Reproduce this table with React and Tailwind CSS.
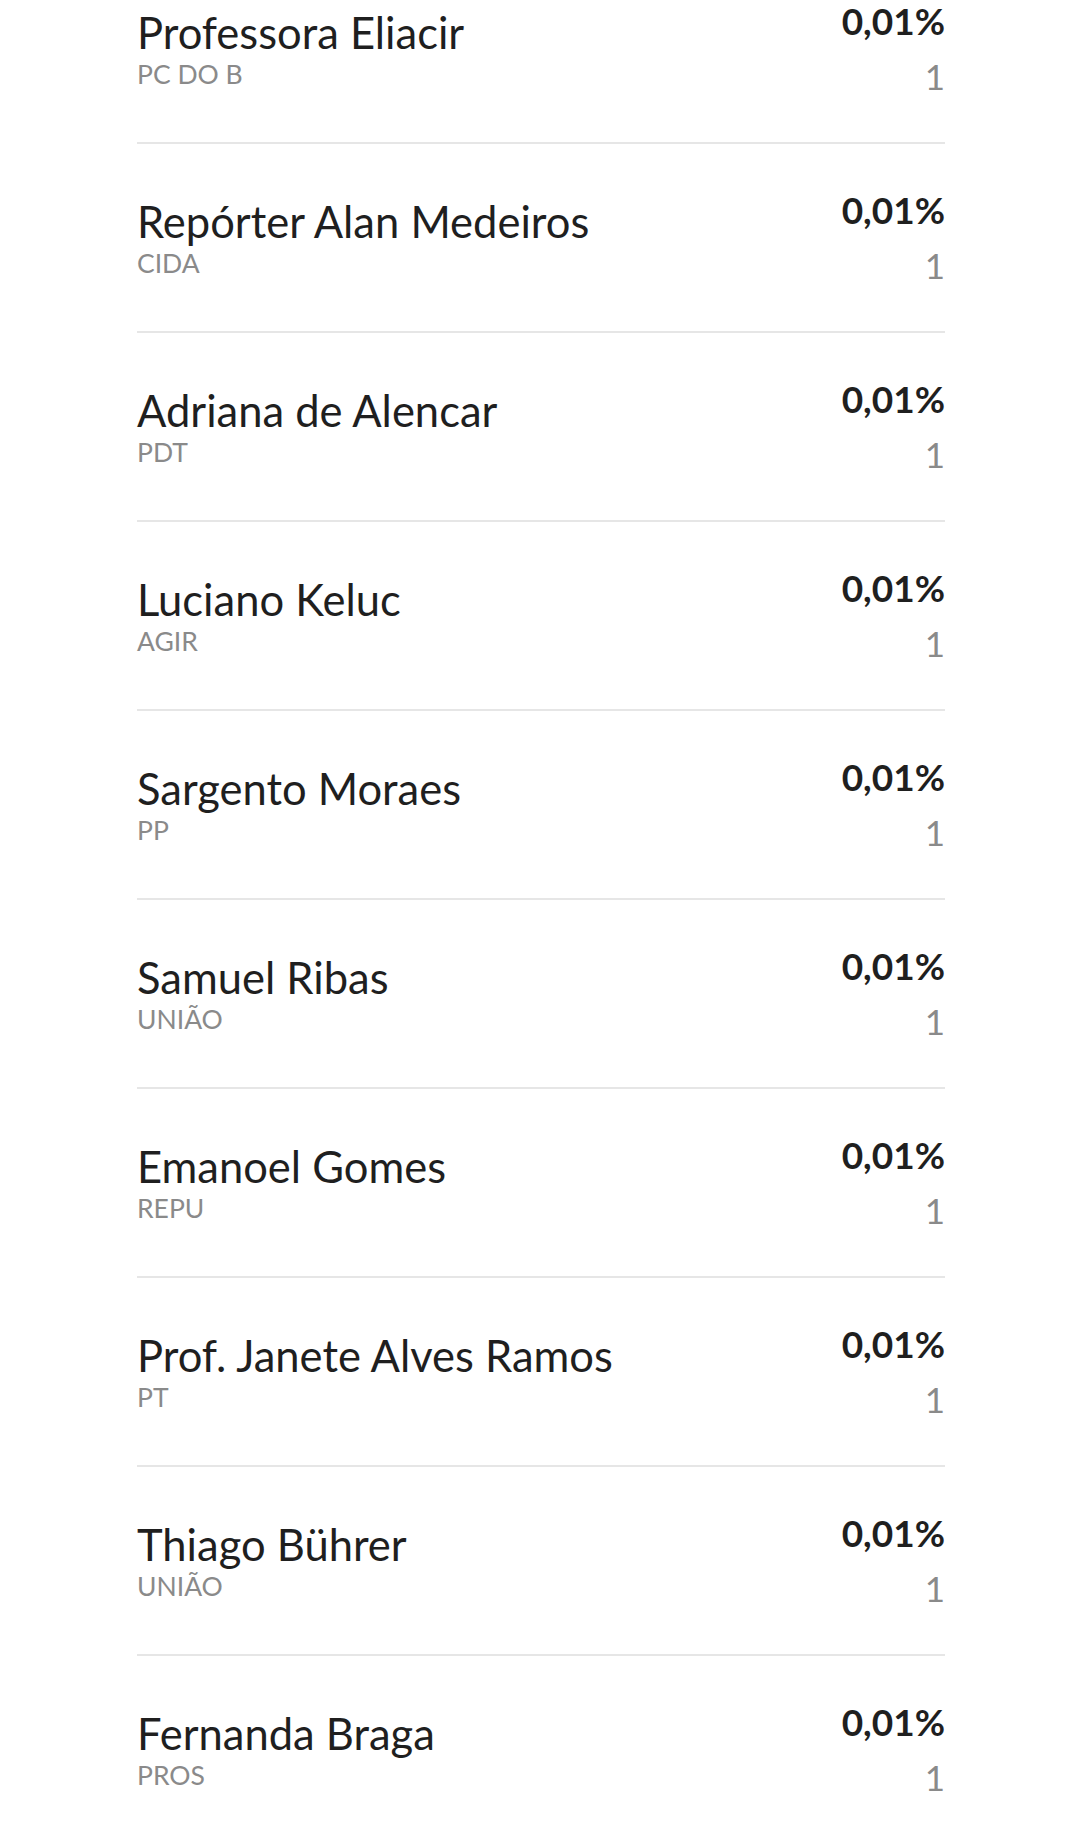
import React from 'react';

const candidates = [
  { name: 'Professora Eliacir', party: 'PC DO B' },
  { name: 'Repórter Alan Medeiros', party: 'CIDA' },
  { name: 'Adriana de Alencar', party: 'PDT' },
  { name: 'Luciano Keluc', party: 'AGIR' },
  { name: 'Sargento Moraes', party: 'PP' },
  { name: 'Samuel Ribas', party: 'UNIÃO' },
  { name: 'Emanoel Gomes', party: 'REPU' },
  { name: 'Prof. Janete Alves Ramos', party: 'PT' },
  { name: 'Thiago Bührer', party: 'UNIÃO' },
  { name: 'Fernanda Braga', party: 'PROS' },
];

const CandidateRow = ({ name, party, percent, votes }) => (
  <li className="flex h-[189px] items-start justify-between border-b-2 border-[#e6e6e6] pt-[47px]">
    <div className="pt-[9px]">
      <p className="text-[43.5px] leading-none text-[#1f1f1f]">{name}</p>
      <p className="mt-[6.5px] text-[26.5px] leading-none text-[#8a8a8a]">{party}</p>
    </div>
    <div className="flex flex-col items-end">
      <p className="text-[37px] font-bold leading-none text-[#1f1f1f]">{percent}</p>
      <p className="mt-[20px] text-[35px] leading-none text-[#8a8a8a]">{votes}</p>
    </div>
  </li>
);

export default function App() {
  return (
    <div className="h-[1828px] overflow-hidden bg-white font-['Lato',sans-serif]">
      <ul className="-mt-[45px] ml-[137px] w-[808px]">
        {candidates.map((c) => (
          <CandidateRow key={c.name} name={c.name} party={c.party} percent="0,01%" votes="1" />
        ))}
      </ul>
    </div>
  );
}
